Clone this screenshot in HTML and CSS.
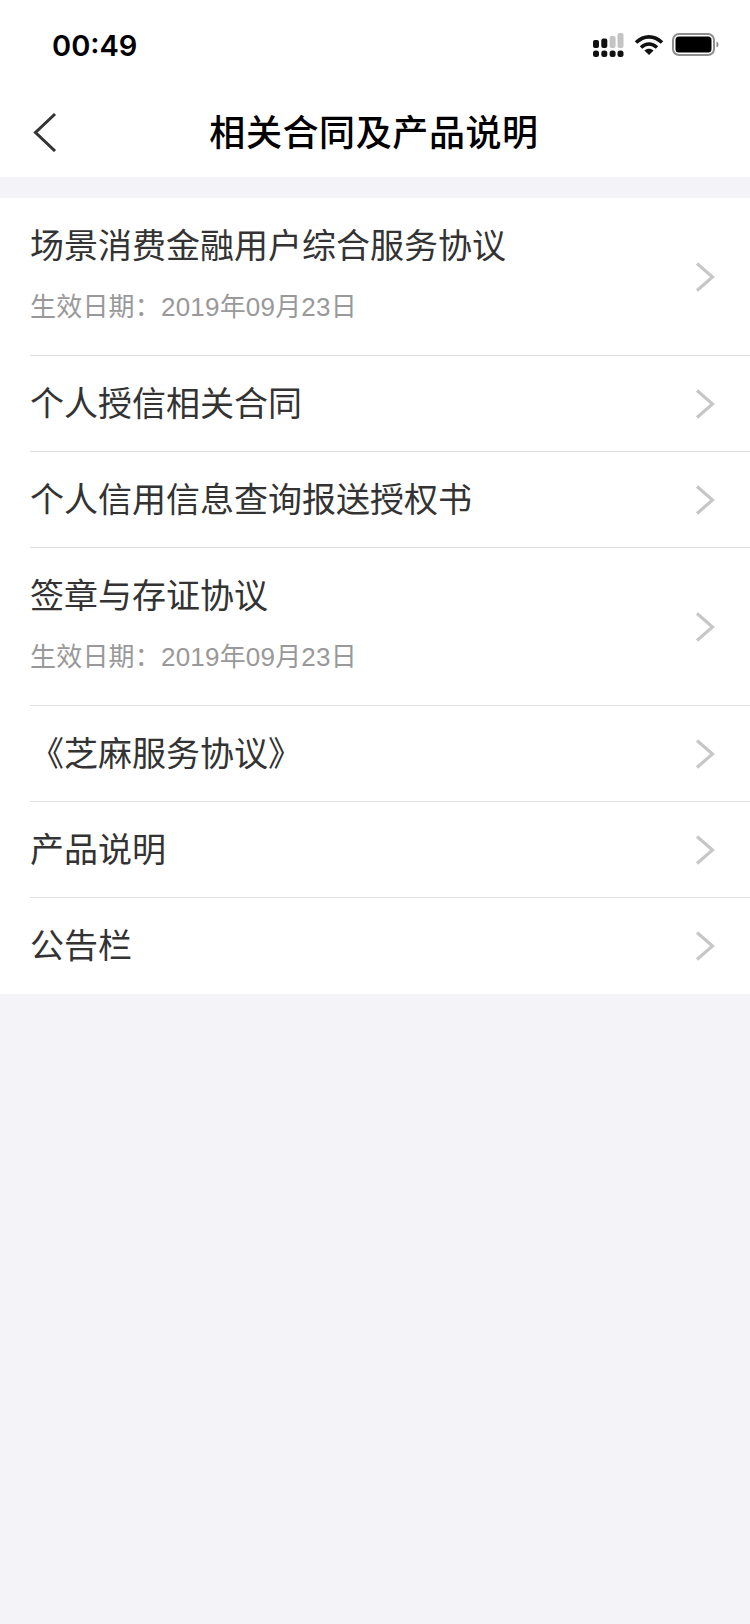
FILE: index.html
```html
<!DOCTYPE html>
<html lang="zh">
<head>
<meta charset="utf-8">
<title>相关合同及产品说明</title>
<link rel="stylesheet" href="styles.css">
</head>
<body>
<header class="status">
  <span class="time">00:49</span>
  <div class="status-icons">
    <svg class="signal" width="32" height="24" viewBox="0 0 32 24">
      <g fill="#111"><rect x="1" y="7" width="6" height="8" rx="2"/><rect x="9.300" y="5.500" width="6" height="9.500" rx="2"/><rect x="1" y="17.500" width="6" height="6.500" rx="2.500"/><rect x="9.300" y="17.500" width="6" height="6.500" rx="2.500"/><rect x="17.600" y="17.500" width="6" height="6.500" rx="2.500"/><rect x="25.500" y="17.500" width="6" height="6.500" rx="2.500"/></g>
      <g fill="#c4c4c4"><rect x="17.600" y="3" width="6" height="12" rx="2"/><rect x="25.500" y="0" width="6" height="15" rx="2"/></g>
    </svg>
    <svg class="wifi" width="30" height="22" viewBox="0 0 30 22">
      <path d="M2 8.500C10 1 20 1 28 8.500M7 13.500C12 9 18 9 23 13.500" fill="none" stroke="#111" stroke-width="3.600"/>
      <path d="M15 21l-4.600-4.600c2.800-2.200 6.400-2.200 9.200 0z" fill="#111"/>
    </svg>
    <svg class="battery" width="48" height="24" viewBox="0 0 48 24">
      <rect x="1" y="1" width="41" height="21" rx="6" fill="none" stroke="#8e8e8e" stroke-width="2"/>
      <rect x="3.500" y="3.500" width="36" height="16" rx="3.500" fill="#000"/>
      <path d="M44.500 8.500c1.500.5 2 2 2 3s-.5 2.500-2 3z" fill="#8a8a8a"/>
    </svg>
  </div>
</header>
<nav class="nav">
  <svg class="back" width="26" height="40" viewBox="0 0 26 40"><path d="M23 2L3.500 20.500 23 39" fill="none" stroke="#333" stroke-width="3"/></svg>
  <h1 class="nav-title">相关合同及产品说明</h1>
</nav>
<main class="list">
  <a class="row row-tall"><div class="row-text"><div class="row-title">场景消费金融用户综合服务协议</div><div class="row-sub">生效日期：2019年09月23日</div></div><svg class="chev" width="20" height="30" viewBox="0 0 20 30"><path d="M2 1.500L17.500 15 2 28.500" fill="none" stroke="#c7c7c7" stroke-width="3.200"/></svg></a>
  <a class="row"><div class="row-text"><div class="row-title">个人授信相关合同</div></div><svg class="chev" width="20" height="30" viewBox="0 0 20 30"><path d="M2 1.500L17.500 15 2 28.500" fill="none" stroke="#c7c7c7" stroke-width="3.200"/></svg></a>
  <a class="row"><div class="row-text"><div class="row-title">个人信用信息查询报送授权书</div></div><svg class="chev" width="20" height="30" viewBox="0 0 20 30"><path d="M2 1.500L17.500 15 2 28.500" fill="none" stroke="#c7c7c7" stroke-width="3.200"/></svg></a>
  <a class="row row-tall"><div class="row-text"><div class="row-title">签章与存证协议</div><div class="row-sub">生效日期：2019年09月23日</div></div><svg class="chev" width="20" height="30" viewBox="0 0 20 30"><path d="M2 1.500L17.500 15 2 28.500" fill="none" stroke="#c7c7c7" stroke-width="3.200"/></svg></a>
  <a class="row"><div class="row-text"><div class="row-title">《芝麻服务协议》</div></div><svg class="chev" width="20" height="30" viewBox="0 0 20 30"><path d="M2 1.500L17.500 15 2 28.500" fill="none" stroke="#c7c7c7" stroke-width="3.200"/></svg></a>
  <a class="row"><div class="row-text"><div class="row-title">产品说明</div></div><svg class="chev" width="20" height="30" viewBox="0 0 20 30"><path d="M2 1.500L17.500 15 2 28.500" fill="none" stroke="#c7c7c7" stroke-width="3.200"/></svg></a>
  <a class="row"><div class="row-text"><div class="row-title">公告栏</div></div><svg class="chev" width="20" height="30" viewBox="0 0 20 30"><path d="M2 1.500L17.500 15 2 28.500" fill="none" stroke="#c7c7c7" stroke-width="3.200"/></svg></a>
</main>
</body>
</html>
```
FILE: styles.css
```css
* { box-sizing: border-box; }
html, body { margin: 0; padding: 0; }
body {
  width: 750px;
  height: 1624px;
  background: #f3f3f8;
  font-family: "Liberation Sans", "Noto Sans CJK SC", sans-serif;
  overflow: hidden;
}
.status {
  height: 88px;
  background: #fff;
  display: flex;
  align-items: center;
  justify-content: space-between;
  padding: 0 30px 0 52px;
}
.time { font-family: Inter, "Liberation Sans", sans-serif; font-size: 29px; font-weight: 600; color: #000; padding-top: 2px; }
.status-icons { display: flex; align-items: center; gap: 10px; padding-top: 2px; }
.battery { margin-left: -2px; }
.nav {
  height: 89px;
  background: #fff;
  display: flex;
  align-items: center;
  justify-content: center;
  position: relative;
}
.back { position: absolute; left: 32px; top: 24px; }
.nav-title { margin: 0 2px 0 0; padding-top: 2px; font-size: 36px; font-weight: 500; color: #000; line-height: 50px; letter-spacing: 0.6px; }
.list { margin-top: 21px; background: #fff; }
.row {
  display: flex;
  align-items: center;
  justify-content: space-between;
  height: 96px;
  margin-left: 30px;
  padding-right: 35px;
  border-bottom: 1px solid #e0e0e0;
}
.row-tall { height: 158px; }
.row:last-child { border-bottom: 0; }
.row-title { font-size: 34px; line-height: 48px; color: #333; }
.row-sub { font-size: 26px; line-height: 36px; color: #999; margin-top: 19px; letter-spacing: 0.2px; }
.row-tall .row-text { margin-top: -6px; }
.chev { display: block; }
```
